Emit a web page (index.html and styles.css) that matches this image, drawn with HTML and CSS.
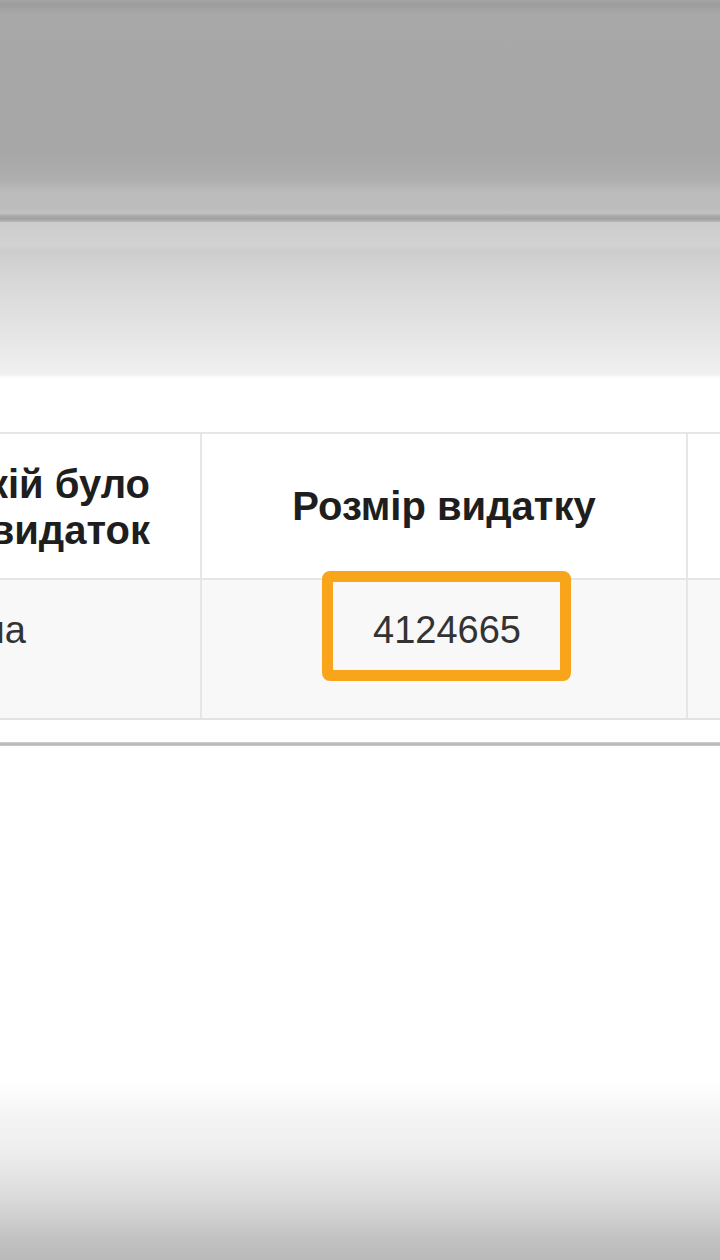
FILE: index.html
```html
<!DOCTYPE html>
<html lang="uk">
<head>
<meta charset="utf-8">
<title>Розмір видатку</title>
<link rel="stylesheet" href="styles.css">
</head>
<body>
<div class="page">
  <div class="topbar"></div>
  <div class="toolbar"></div>
  <div class="content">
    <div class="grid">
      <div class="cell head first"><span class="clip">Рік, у якій було<br>здійснено видаток</span></div>
      <div class="cell head">Розмір видатку</div>
      <div class="cell head last"></div>
      <div class="cell body first"><span class="clip">Україна</span></div>
      <div class="cell body mid">
        <span class="value">4124665</span>
        <span class="highlight"></span>
      </div>
      <div class="cell body last"></div>
    </div>
    <div class="shadow"></div>
  </div>
  <div class="footer"></div>
</div>
</body>
</html>
```

FILE: styles.css
```css
html, body {
  margin: 0;
  padding: 0;
}
body {
  font-family: "Liberation Sans", Arial, sans-serif;
  background: #ffffff;
}
.page {
  display: flex;
  flex-direction: column;
  height: 1260px;
  overflow: hidden;
}
.topbar {
  height: 222px;
  flex: none;
  background: linear-gradient(to bottom,
    #a4a4a4 0px, #9c9c9c 5px, #a3a3a3 9px, #a8a8a8 14px,
    #a7a7a7 150px, #aeaeae 180px, #bbbbbb 191px, #bdbdbd 210px,
    #c3c3c3 213px, #a9a9a9 216px, #a1a1a1 219px, #b9b9b9 222px);
}
.toolbar {
  height: 156px;
  flex: none;
  background: linear-gradient(to bottom,
    #cdcdcd 0px, #d2d2d2 24px, #cdcdcd 28px, #d8d8d8 60px,
    #e2e2e2 100px, #eaeaea 130px, #f0f0f0 152px, #ffffff 156px);
}
.content {
  flex: 1;
  background: #ffffff;
  padding-top: 54px;
}
.grid {
  display: grid;
  grid-template-columns: 202px 486px 1fr;
  grid-template-rows: 146px 138px;
  border-top: 2px solid #e6e6e6;
  border-bottom: 2px solid #e2e2e2;
  overflow: hidden;
}
.cell {
  border-right: 2px solid #e6e6e6;
  display: flex;
  position: relative;
}
.cell.first {
  overflow: hidden;
}
.cell.last {
  border-right: none;
}
.head {
  background: #ffffff;
  border-bottom: 2px solid #e6e6e6;
  align-items: center;
  justify-content: center;
  font-weight: bold;
  font-size: 40px;
  line-height: 46px;
  color: #1e1e1e;
  text-align: center;
}
.head.first {
  justify-content: flex-end;
  text-align: right;
  padding-right: 50px;
  padding-top: 2px;
}
.clip {
  white-space: nowrap;
  flex: none;
}
.body {
  background: #f8f8f8;
  align-items: flex-start;
  justify-content: center;
  padding-top: 28px;
  font-size: 38px;
  line-height: 44px;
  color: #333333;
}
.body.first {
  justify-content: flex-end;
  padding-right: 174px;
}
.value {
  position: relative;
  left: 3px;
}
.highlight {
  position: absolute;
  left: 120px;
  top: -9px;
  width: 249px;
  height: 110px;
  box-sizing: border-box;
  border: 11px solid #f9a51b;
  border-radius: 8px;
  z-index: 2;
}
.shadow {
  height: 4px;
  margin-top: 22px;
  background: linear-gradient(to bottom, #d4d4d4, #b4b4b4 50%, #cccccc);
}
.footer {
  height: 180px;
  flex: none;
  background: linear-gradient(to bottom,
    #ffffff 0px, #fafafa 20px, #f3f3f3 40px, #eeeeee 70px,
    #e2e2e2 100px, #d4d4d4 130px, #c4c4c4 155px, #b9b9b9 180px);
}
```
